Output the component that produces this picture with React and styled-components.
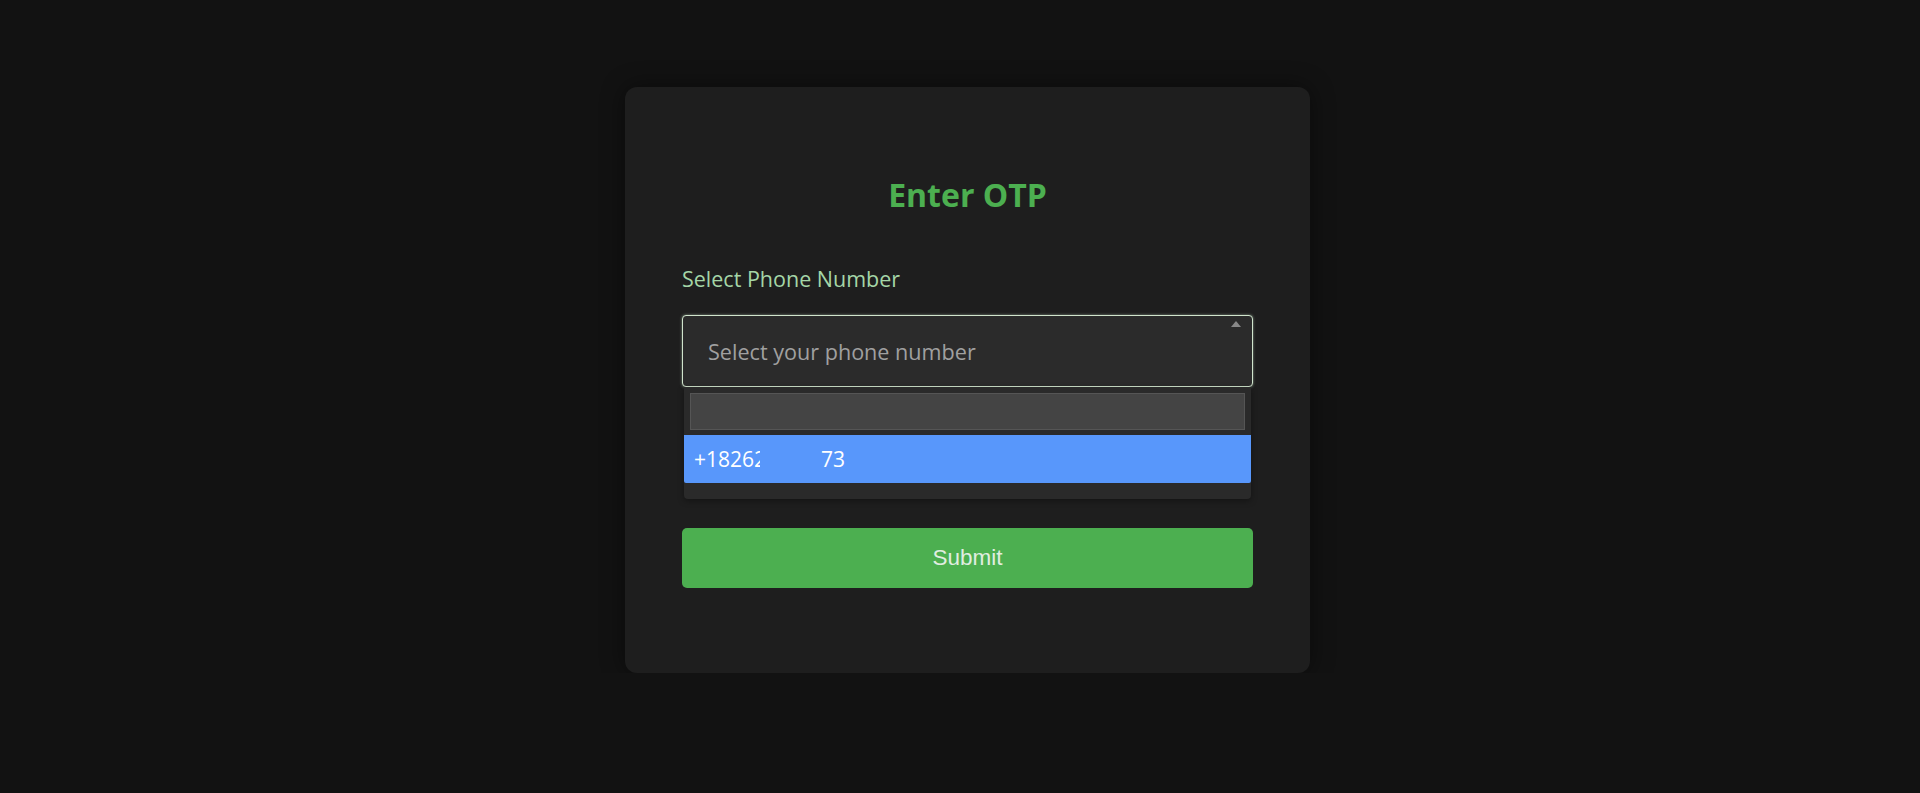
import React from "react";
import styled, { createGlobalStyle } from "styled-components";

const GlobalStyle = createGlobalStyle`
	body {
		margin: 0;
		background: #121212;
		font-family: "Open Sans", "Noto Sans", sans-serif;
	}
`;

export default function App() {
	return (
		<>
			<GlobalStyle />
			<Page>
				<Card>
					<Title>Enter OTP</Title>
					<Label>Select Phone Number</Label>
					<SelectWrap>
						<SelectBox>
							<Placeholder>Select your phone number</Placeholder>
							<Arrow />
						</SelectBox>
						<Dropdown>
							<SearchField />
							<Option $active>
								+1826<Hidden>2</Hidden>
								<Masked />
								73
							</Option>
						</Dropdown>
					</SelectWrap>
					<SubmitButton>Submit</SubmitButton>
				</Card>
			</Page>
		</>
	);
}

const Page = styled.div`
	display: flex;
	justify-content: center;
	padding: 87px 0 0 15px;
`;

const Card = styled.div`
	width: 685px;
	height: 586px;
	box-sizing: border-box;
	padding: 0 57px;
	background-color: #1e1e1e;
	border-radius: 12px;
	box-shadow: 0 0 24px rgba(0, 0, 0, 0.45);
	display: flex;
	flex-direction: column;
`;

const Title = styled.h2`
	margin: 88px 0 0;
	text-align: center;
	font-size: 32px;
	font-weight: 700;
	line-height: 40px;
	color: #4caf50;
`;

const Label = styled.div`
	margin-top: 50px;
	font-size: 21.5px;
	line-height: 28px;
	color: #a5d6a7;
`;

const SelectWrap = styled.div`
	position: relative;
	margin-top: 22px;
`;

const SelectBox = styled.div`
	position: relative;
	height: 72px;
	box-sizing: border-box;
	border: 1px solid #d0e4cc;
	border-radius: 4px;
	background-color: #2b2b2b;
	box-shadow: 0 0 3px rgba(200, 230, 200, 0.55);
	display: flex;
	align-items: center;
	padding-left: 25px;
`;

const Placeholder = styled.span`
	font-size: 21.6px;
	color: #a0a0a0;
`;

const Arrow = styled.span`
	position: absolute;
	top: 5px;
	right: 11px;
	width: 0;
	height: 0;
	border-left: 5px solid transparent;
	border-right: 5px solid transparent;
	border-bottom: 6px solid #888;
`;

const Dropdown = styled.div`
	position: absolute;
	top: 100%;
	left: 2px;
	right: 2px;
	height: 112px;
	box-sizing: border-box;
	padding-top: 6px;
	background-color: #2a2a2a;
	border-radius: 0 0 4px 4px;
	box-shadow: 0 2px 6px rgba(0, 0, 0, 0.35);
`;

const SearchField = styled.div`
	height: 37px;
	margin: 0 6px;
	box-sizing: border-box;
	border: 1px solid #555;
	background-color: #444;
`;

const Option = styled.div`
	margin-top: 5px;
	height: 48px;
	display: flex;
	align-items: center;
	padding-left: 10px;
	font-size: 21px;
	color: #fff;
	background-color: ${(p) => (p.$active ? "#5897fb" : "transparent")};
	border-bottom-left-radius: 2px;
	border-bottom-right-radius: 2px;
`;

const Hidden = styled.span`
	display: inline-block;
	width: 6px;
	overflow: hidden;
`;

const Masked = styled.span`
	display: inline-block;
	width: 61px;
`;

const SubmitButton = styled.button`
	margin-top: 141px;
	height: 60px;
	border: none;
	border-radius: 5px;
	background-color: #4caf50;
	color: #e0ede0;
	font-family: "Liberation Sans", Arial, sans-serif;
	font-size: 22.5px;
	cursor: pointer;
`;
